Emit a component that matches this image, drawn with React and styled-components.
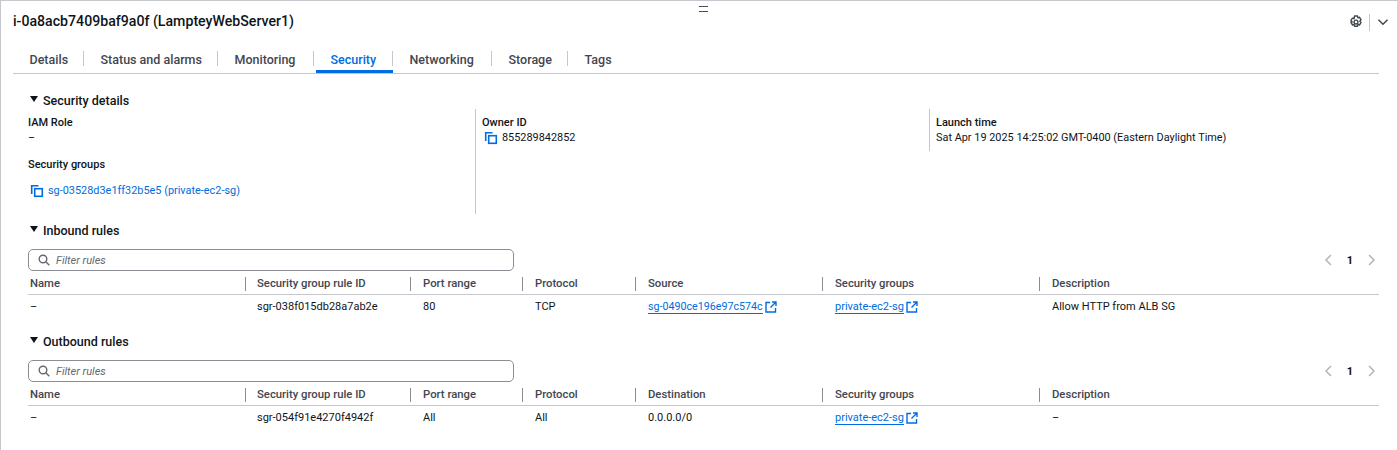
import React from "react";
import styled, { createGlobalStyle } from "styled-components";

const GlobalStyle = createGlobalStyle`
  html, body {
    margin: 0;
    padding: 0;
    background: #fff;
  }
  body {
    font-family: "Roboto", "Liberation Sans", sans-serif;
    font-size: 11px;
    color: #16191f;
  }
`;

const Page = styled.div`
  position: relative;
  width: 1397px;
  height: 450px;
  box-sizing: border-box;
  overflow: hidden;
  border-top: 1px solid #c6c6cd;
  border-left: 1px solid #c6c6cd;
  padding-top: 11px;
`;

const DragHandle = styled.div`
  position: absolute;
  top: 5px;
  left: 698px;
  width: 9px;
  height: 4px;
  border-top: 1px solid #414d5c;
  border-bottom: 1px solid #414d5c;
`;

const TitleBar = styled.div`
  display: flex;
  align-items: center;
  justify-content: space-between;
  height: 18px;
  padding: 0 8px 0 12px;
`;

const Title = styled.h1`
  margin: 0;
  font-size: 14.15px;
  font-weight: 500;
  line-height: 18px;
  color: #0f141a;
`;

const TitleActions = styled.div`
  display: flex;
  align-items: center;
  margin-top: 2px;
  color: #424650;
`;

const ActionDivider = styled.span`
  width: 1px;
  height: 17px;
  margin: 0 7px 0 6px;
  background: #c6c6cd;
`;

const TabBar = styled.div`
  display: flex;
  height: 27px;
  margin: 16px 18px 0 12px;
  border-bottom: 1px solid #c6c6cd;
`;

const Tab = styled.div`
  position: relative;
  box-sizing: border-box;
  width: ${(p) => p.$w}px;
  height: 27px;
  display: flex;
  align-items: center;
  padding-left: 16.5px;
  font-size: 12.5px;
  font-weight: 500;
  color: ${(p) => (p.$active ? "#006ce0" : "#424650")};

  &::after {
    content: "";
    display: ${(p) => (p.$last ? "none" : "block")};
    position: absolute;
    right: 0;
    top: 5px;
    height: 15px;
    width: 1px;
    background: #c6c6cd;
  }

  &::before {
    content: "";
    display: ${(p) => (p.$active ? "block" : "none")};
    position: absolute;
    left: 2px;
    right: 0;
    bottom: 0;
    height: 3px;
    background: #006ce0;
  }
`;

const Content = styled.div`
  padding: 0 18px 0 27px;
`;

const SectionHeading = styled.div`
  display: flex;
  align-items: center;
  gap: 5px;
  height: 16px;
  margin-top: ${(p) => p.$top}px;
  font-size: 12.5px;
  font-weight: 500;
  color: #0f141a;
`;

const Caret = styled.span`
  width: 0;
  height: 0;
  margin-left: 2px;
  margin-bottom: 2px;
  border-left: 4px solid transparent;
  border-right: 4px solid transparent;
  border-top: 6px solid #0f141a;
`;

const DetailGrid = styled.div`
  display: grid;
  grid-template-columns: 448px 454px 1fr;
  align-items: start;
  height: 105px;
  margin-top: 1px;
`;

const DetailColumn = styled.div`
  display: flex;
  flex-direction: column;
  box-sizing: border-box;
  padding-top: 7px;
  padding-left: ${(p) => (p.$first ? 0 : 6)}px;
  height: ${(p) => p.$h}px;
  border-right: ${(p) => (p.$divider ? "1px solid #c6c6cd" : "none")};
`;

const Label = styled.div`
  font-size: 11px;
  font-weight: 500;
  line-height: 14px;
  color: #0f141a;
  margin-top: ${(p) => p.$top || 0}px;
`;

const Value = styled.div`
  display: flex;
  align-items: center;
  gap: 4px;
  font-size: 10.9px;
  line-height: 14px;
  margin-top: ${(p) => p.$top || 0}px;
  color: #0f141a;

  svg {
    margin-left: 2px;
  }
`;

const CopyLink = styled.a`
  color: #006ce0;
`;

const FilterRow = styled.div`
  display: flex;
  align-items: flex-end;
  justify-content: space-between;
  margin-top: 11px;
`;

const Filter = styled.div`
  display: flex;
  align-items: center;
  gap: 6px;
  box-sizing: border-box;
  width: 486px;
  height: 22px;
  padding-left: 9px;
  border: 1px solid #8c8c94;
  border-radius: 5px;
  font-size: 11px;
  font-style: italic;
  color: #656871;
`;

const Pager = styled.div`
  display: flex;
  align-items: center;
  gap: 13px;
  height: 22px;
  margin-right: 3px;
  font-size: 11px;
  font-weight: 700;
  color: #0f141a;
`;

const columns = "217px 165px 112px 113px 187px 217px 1fr";

const HeaderRow = styled.div`
  display: grid;
  grid-template-columns: ${columns};
  height: 24px;
  padding-top: 1px;
  box-sizing: border-box;
  align-items: center;
  border-bottom: 1px solid #c6c6cd;
`;

const HeaderCell = styled.div`
  position: relative;
  padding-left: ${(p) => p.$pad}px;
  font-size: 11.3px;
  font-weight: 500;
  color: #424650;

  &::before {
    content: "";
    display: ${(p) => (p.$pad === 2 ? "none" : "block")};
    position: absolute;
    left: 0;
    top: 0;
    width: 1px;
    height: 14px;
    background: #8c8c94;
  }
`;

const BodyRow = styled.div`
  display: grid;
  grid-template-columns: ${columns};
  height: 23px;
  align-items: center;
`;

const Cell = styled.div`
  display: flex;
  align-items: center;
  padding-left: ${(p) => p.$pad}px;
  font-size: 11px;
  color: #0f141a;
`;

const ExternalLink = styled.a`
  display: inline-flex;
  align-items: center;
  gap: 2px;
  color: #006ce0;
`;

const LinkText = styled.span`
  font-size: ${(p) => p.$size || 11}px;
  line-height: 13px;
  border-bottom: 1px solid #006ce0;
`;

const CopyIcon = () => (
  <svg width="14" height="14" viewBox="0 0 14 14" fill="none" stroke="#006ce0" strokeWidth="1.6">
    <rect x="4.7" y="4.7" width="7.6" height="7.6" />
    <path d="M8.5 1.7H1.7v8.4" />
  </svg>
);

const ExternalIcon = () => (
  <svg width="12" height="12" viewBox="0 0 12 12" fill="none" stroke="#006ce0" strokeWidth="1.4">
    <path d="M5 1.5H1v9.5h9.5V7" />
    <path d="M7 1h4v4M11 1L5.5 6.5" />
  </svg>
);

const GearIcon = () => (
  <svg width="14" height="14" viewBox="0 0 16 16" fill="none" stroke="#424650" strokeWidth="1.6" strokeLinejoin="round">
    <path d="M6.3 1.2h3.4l.5 2 1.9-.6 1.7 2.9-1.5 1.5 1.5 1.5-1.7 2.9-1.9-.6-.5 2H6.3l-.5-2-1.9.6-1.7-2.9L3.7 8 2.2 6.5l1.7-2.9 1.9.6z" />
    <circle cx="8" cy="8" r="2.2" />
  </svg>
);

const ChevronDown = () => (
  <svg width="12" height="12" viewBox="0 0 12 12" fill="none" stroke="#424650" strokeWidth="1.5">
    <path d="M1.5 3.8L6 8.3l4.500-4.500" />
  </svg>
);

const SearchIcon = () => (
  <svg width="12" height="12" viewBox="0 0 12 12" fill="none" stroke="#656871" strokeWidth="1.4">
    <circle cx="5" cy="5" r="3.8" />
    <path d="M7.8 7.8L11.3 11.3" />
  </svg>
);

const PagerArrow = ({ d }) => (
  <svg width="10" height="12" viewBox="0 0 10 12" fill="none" stroke="#b4b4bb" strokeWidth="1.5">
    <path d={d} />
  </svg>
);

const tabs = [
  { label: "Details", w: 71 },
  { label: "Status and alarms", w: 134 },
  { label: "Monitoring", w: 96 },
  { label: "Security", w: 79, active: true },
  { label: "Networking", w: 99 },
  { label: "Storage", w: 76 },
  { label: "Tags", w: 70 },
];

const cellPads = [2, 12, 13, 13, 13, 13, 13];

const RulesTable = ({ lastHeader, row }) => {
  const headers = ["Name", "Security group rule ID", "Port range", "Protocol", lastHeader, "Security groups", "Description"];
  return (
    <>
      <FilterRow>
        <Filter>
          <SearchIcon />
          Filter rules
        </Filter>
        <Pager>
          <PagerArrow d="M7 1L2 6l5 5" />
          1
          <PagerArrow d="M3 1l5 5-5 5" />
        </Pager>
      </FilterRow>
      <HeaderRow>
        {headers.map((h, i) => (
          <HeaderCell key={h} $pad={cellPads[i]}>
            {h}
          </HeaderCell>
        ))}
      </HeaderRow>
      <BodyRow>
        <Cell $pad={cellPads[0]}>–</Cell>
        <Cell $pad={cellPads[1]}>{row.id}</Cell>
        <Cell $pad={cellPads[2]}>{row.port}</Cell>
        <Cell $pad={cellPads[3]}>{row.protocol}</Cell>
        <Cell $pad={cellPads[4]}>
          {row.sourceLink ? (
            <ExternalLink>
              <LinkText $size={10.7}>{row.source}</LinkText>
              <ExternalIcon />
            </ExternalLink>
          ) : (
            row.source
          )}
        </Cell>
        <Cell $pad={cellPads[5]}>
          <ExternalLink>
            <LinkText>private-ec2-sg</LinkText>
            <ExternalIcon />
          </ExternalLink>
        </Cell>
        <Cell $pad={cellPads[6]}>{row.description}</Cell>
      </BodyRow>
    </>
  );
};

const App = () => {
  return (
    <Page>
      <GlobalStyle />
      <DragHandle />
      <TitleBar>
        <Title>i-0a8acb7409baf9a0f (LampteyWebServer1)</Title>
        <TitleActions>
          <GearIcon />
          <ActionDivider />
          <ChevronDown />
        </TitleActions>
      </TitleBar>
      <TabBar>
        {tabs.map((t, i) => (
          <Tab key={t.label} $w={t.w} $active={t.active} $last={i === tabs.length - 1}>
            {t.label}
          </Tab>
        ))}
      </TabBar>
      <Content>
        <SectionHeading $top={18}>
          <Caret />
          Security details
        </SectionHeading>
        <DetailGrid>
          <DetailColumn $first $divider $h={105}>
            <Label>IAM Role</Label>
            <Value $top={1}>–</Value>
            <Label $top={13}>Security groups</Label>
            <Value $top={12}>
              <CopyIcon />
              <CopyLink>sg-03528d3e1ff32b5e5 (private-ec2-sg)</CopyLink>
            </Value>
          </DetailColumn>
          <DetailColumn $divider $h={42}>
            <Label>Owner ID</Label>
            <Value $top={1}>
              <CopyIcon />
              855289842852
            </Value>
          </DetailColumn>
          <DetailColumn $h={42}>
            <Label>Launch time</Label>
            <Value $top={1}>Sat Apr 19 2025 14:25:02 GMT-0400 (Eastern Daylight Time)</Value>
          </DetailColumn>
        </DetailGrid>
        <SectionHeading $top={8}>
          <Caret />
          Inbound rules
        </SectionHeading>
        <RulesTable
          lastHeader="Source"
          row={{ id: "sgr-038f015db28a7ab2e", port: "80", protocol: "TCP", source: "sg-0490ce196e97c574c", sourceLink: true, description: "Allow HTTP from ALB SG" }}
        />
        <SectionHeading $top={15}>
          <Caret />
          Outbound rules
        </SectionHeading>
        <RulesTable
          lastHeader="Destination"
          row={{ id: "sgr-054f91e4270f4942f", port: "All", protocol: "All", source: "0.0.0.0/0", description: "–" }}
        />
      </Content>
    </Page>
  );
};

export default App;
